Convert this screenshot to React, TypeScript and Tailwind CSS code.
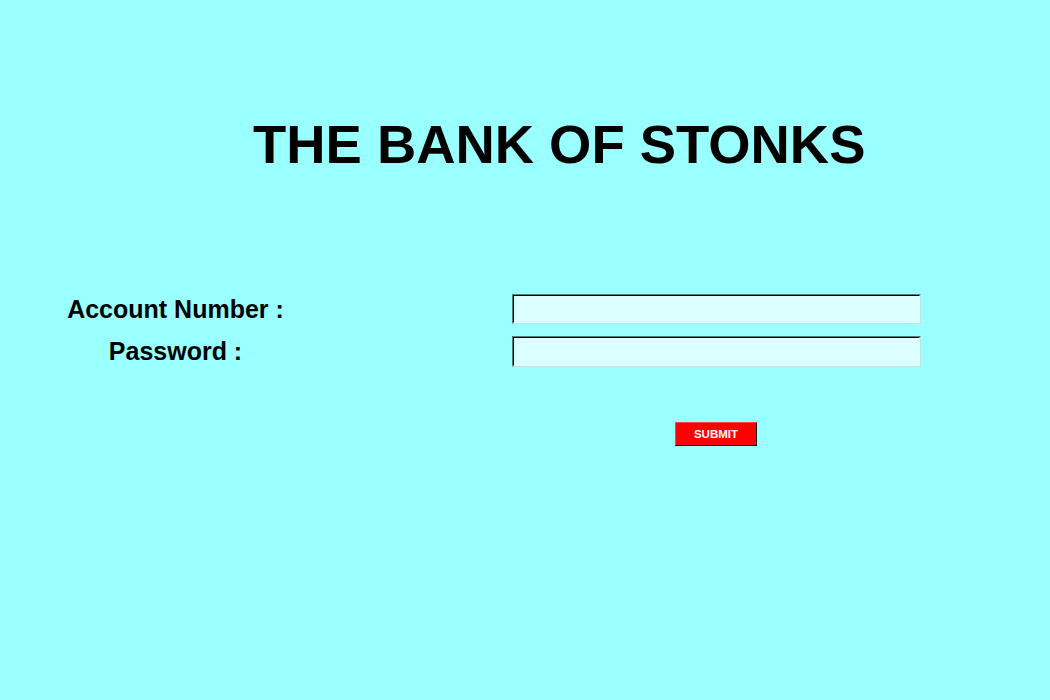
import React from "react";

export default function App() {
  return (
    <div
      className="w-[1050px] h-[700px] bg-[#99ffff] overflow-hidden"
      style={{ fontFamily: '"Liberation Sans", Arial, sans-serif' }}
    >
      <div className="pt-[118px] pl-[253px]">
        <h1 className="text-[54.4px] leading-none font-bold text-black whitespace-nowrap">
          THE BANK OF STONKS
        </h1>
      </div>

      <div className="mt-[122px] flex flex-col gap-[12px]">
        <div className="flex items-center h-[30px]">
          <div className="w-[351px] text-center text-[25px] leading-none font-bold text-black">
            Account Number :
          </div>
          <div className="ml-[161px] w-[409px] h-[30px] border border-t-[#4f7f7f] border-l-[#4f7f7f] border-b-[#bfe6e6] border-r-[#bfe6e6]">
            <input
              type="text"
              className="block w-full h-full bg-[#dcffff] border border-t-black border-l-black border-b-[#e0ffff] border-r-[#e0ffff] outline-none"
            />
          </div>
        </div>
        <div className="flex items-center h-[31px]">
          <div className="w-[351px] text-center text-[25px] leading-none font-bold text-black">
            Password :
          </div>
          <div className="ml-[161px] w-[409px] h-[31px] border border-t-[#4f7f7f] border-l-[#4f7f7f] border-b-[#bfe6e6] border-r-[#bfe6e6]">
            <input
              type="password"
              className="block w-full h-full bg-[#dcffff] border border-t-black border-l-black border-b-[#e0ffff] border-r-[#e0ffff] outline-none"
            />
          </div>
        </div>
      </div>

      <div className="mt-[55px] ml-[675px]">
        <button className="w-[82px] h-[24px] bg-[#ff0000] border border-[#ff4040] border-b-black border-r-black text-white text-[11.5px] font-bold leading-none flex items-center justify-center">
          SUBMIT
        </button>
      </div>
    </div>
  );
}
